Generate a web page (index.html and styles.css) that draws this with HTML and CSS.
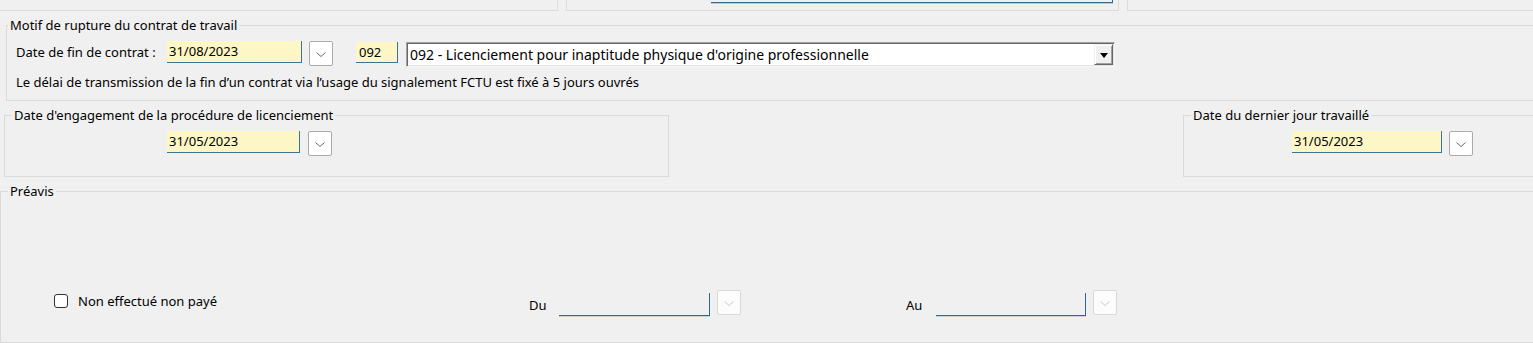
FILE: index.html
```html
<!DOCTYPE html>
<html lang="fr">
<head>
<meta charset="utf-8">
<title>Motif de rupture</title>
<link rel="stylesheet" href="styles.css">
</head>
<body>
<div class="screen">
  <div class="toprow">
    <div class="tbox tbox1"></div>
    <div class="tbox tbox2"><div class="tinput"></div></div>
    <div class="tbox tbox3"></div>
  </div>

  <fieldset class="grp grp-motif">
    <legend>Motif de rupture du contrat de travail</legend>
    <div class="row1">
      <span class="lbl">Date de fin de contrat :</span>
      <div class="field date-fin">31/08/2023</div>
      <button class="cal cal-fin" type="button"><svg width="10" height="5" viewBox="0 0 10 5"><path d="M0.5 0.5 L5 4.5 L9.5 0.5" fill="none" stroke="#6a6a6a" stroke-width="1"/></svg></button>
      <div class="field code">092</div>
      <div class="combo">
        <span class="combo-text">092 - Licenciement pour inaptitude physique d'origine professionnelle</span>
        <span class="combo-btn"><svg width="8" height="5" viewBox="0 0 8 5"><path d="M0 0 H8 L4 5 Z" fill="#000"/></svg></span>
      </div>
    </div>
    <p class="note">Le délai de transmission de la fin d’un contrat via l’usage du signalement FCTU est fixé à 5 jours ouvrés</p>
  </fieldset>

  <div class="midrow">
    <fieldset class="grp grp-eng">
      <legend>Date d'engagement de la procédure de licenciement</legend>
      <div class="daterow">
        <div class="field date-eng">31/05/2023</div>
        <button class="cal cal-eng" type="button"><svg width="10" height="5" viewBox="0 0 10 5"><path d="M0.5 0.5 L5 4.5 L9.5 0.5" fill="none" stroke="#6a6a6a" stroke-width="1"/></svg></button>
      </div>
    </fieldset>
    <fieldset class="grp grp-last">
      <legend>Date du dernier jour travaillé</legend>
      <div class="daterow">
        <div class="field date-last">31/05/2023</div>
        <button class="cal cal-last" type="button"><svg width="10" height="5" viewBox="0 0 10 5"><path d="M0.5 0.5 L5 4.5 L9.5 0.5" fill="none" stroke="#6a6a6a" stroke-width="1"/></svg></button>
      </div>
    </fieldset>
  </div>

  <fieldset class="grp grp-preavis">
    <legend>Préavis</legend>
    <div class="prerow">
      <label class="chk"><span class="box"></span><span>Non effectué non payé</span></label>
      <span class="plbl">Du</span>
      <div class="dfield dfield-du"></div>
      <button class="cal dis" type="button" disabled><svg width="10" height="5" viewBox="0 0 10 5"><path d="M0.5 0.5 L5 4.5 L9.5 0.5" fill="none" stroke="#c9c9c9" stroke-width="1"/></svg></button>
      <span class="plbl plbl-au">Au</span>
      <div class="dfield dfield-au"></div>
      <button class="cal dis" type="button" disabled><svg width="10" height="5" viewBox="0 0 10 5"><path d="M0.5 0.5 L5 4.5 L9.5 0.5" fill="none" stroke="#c9c9c9" stroke-width="1"/></svg></button>
    </div>
  </fieldset>
</div>
</body>
</html>
```

FILE: styles.css
```css
* { box-sizing: border-box; }

html, body {
  margin: 0;
  padding: 0;
  background: #f0f0f0;
}

body {
  font-family: "Noto Sans", "Open Sans", sans-serif;
  font-size: 13px;
  color: #000;
}

.screen {
  width: 1533px;
  height: 343px;
  overflow: hidden;
  background: #f0f0f0;
}

/* top partial boxes */
.toprow {
  display: flex;
  height: 11px;
}
.tbox {
  height: 11px;
  border-bottom: 1px solid #dcdcdc;
  flex: none;
}
.tbox1 {
  width: 558px;
  border-right: 1px solid #dcdcdc;
}
.tbox2 {
  width: 553px;
  margin-left: 8px;
  border-left: 1px solid #dcdcdc;
  border-right: 1px solid #dcdcdc;
}
.tbox3 {
  width: 420px;
  margin-left: 8px;
  border-left: 1px solid #dcdcdc;
}
.tinput {
  margin-left: 144px;
  width: 402px;
  height: 3px;
  border-bottom: 1px solid #2f6a8f;
  border-right: 1px solid #2f6a8f;
  box-shadow: 0 1px 0 #b9cad6;
}

/* group boxes */
.grp {
  margin: 0;
  padding: 0;
  border: 1px solid #dadada;
  min-inline-size: 0;
}
.grp legend {
  padding: 0 2px;
  line-height: 16px;
  height: 16px;
  margin-left: 7px;
}

.grp-motif {
  margin: 6px 0 0 6px;
  width: 1540px;
  padding: 0 0 10px 0;
}
.grp-motif legend { margin-left: 1px; }

.row1 {
  display: flex;
  align-items: flex-start;
  margin-top: 8px;
  height: 26px;
  padding-left: 9px;
}
.lbl {
  width: 151px;
  line-height: 22px;
  flex: none;
}

.field {
  background: #fdf7c6;
  border-right: 1px solid #3d7396;
  border-bottom: 1px solid #3d7396;
  line-height: 21px;
  padding-left: 2px;
  flex: none;
}
.date-fin { width: 135px; height: 22px; }
.code { width: 42px; height: 21px; margin-left: 23px; margin-top: 1px; line-height: 20px; padding-left: 3px; }

.cal {
  flex: none;
  width: 24px;
  height: 25px;
  margin: 0;
  padding: 0;
  background: #fff;
  border: 1px solid #ababab;
  border-radius: 2px;
  display: flex;
  align-items: center;
  justify-content: center;
}
.cal svg { display: block; margin-top: 1px; }
.cal-fin { margin-left: 7px; }

.combo {
  flex: none;
  width: 709px;
  height: 25px;
  margin-left: 8px;
  margin-top: 1px;
  background: #fff;
  border-top: 1px solid #a0a0a0;
  border-left: 1px solid #a0a0a0;
  border-right: 1px solid #f7f7f7;
  border-bottom: 1px solid #f7f7f7;
  box-shadow: inset 1px 1px 0 #696969, inset -1px -1px 0 #e3e3e3;
  display: flex;
  align-items: stretch;
  padding: 1px;
}
.combo-text {
  flex: 1;
  padding-left: 2px;
  line-height: 21px;
  font-size: 14px;
  white-space: nowrap;
}
.combo-btn {
  width: 19px;
  background: #f0f0f0;
  border-top: 1px solid #f0f0f0;
  border-left: 1px solid #f0f0f0;
  border-right: 1px solid #696969;
  border-bottom: 1px solid #696969;
  box-shadow: inset 1px 1px 0 #fff, inset -1px -1px 0 #a0a0a0;
  display: flex;
  align-items: center;
  justify-content: center;
}
.combo-btn svg { display: block; margin-top: 1px; }

.note {
  margin: 7px 0 0 0;
  line-height: 16px;
  padding-left: 9px;
}

/* middle row */
.midrow {
  display: flex;
  align-items: flex-start;
  margin-top: 6px;
}
.grp-eng {
  flex: none;
  width: 665px;
  height: 70px;
  margin-left: 4px;
}
.grp-last {
  flex: none;
  width: 400px;
  height: 70px;
  margin-left: 514px;
}
.daterow {
  display: flex;
  align-items: flex-start;
  margin-top: 8px;
}
.grp-eng .daterow { padding-left: 162px; }
.grp-last .daterow { padding-left: 108px; }
.date-eng { width: 133px; height: 22px; }
.cal-eng { margin-left: 8px; }
.date-last { width: 150px; height: 22px; }
.cal-last { margin-left: 7px; }

/* préavis */
.grp-preavis {
  margin: 6px 0 0 0;
  width: 1540px;
  height: 160px;
}
.prerow {
  display: flex;
  align-items: flex-start;
  margin-top: 91px;
  padding-left: 53px;
}
.chk {
  flex: none;
  width: 475px;
  display: flex;
  align-items: center;
  gap: 10px;
  margin-top: 3px;
  line-height: 16px;
}
.chk .box {
  width: 14px;
  height: 14px;
  border: 1px solid #333;
  border-radius: 3px;
  background: #fff;
  flex: none;
}
.plbl {
  flex: none;
  width: 30px;
  line-height: 16px;
  margin-top: 7px;
}
.plbl-au { margin-left: 165px; }
.dfield {
  flex: none;
  height: 23px;
  margin-top: 3px;
  border-right: 1px solid #2f6a8f;
  border-bottom: 1px solid #2f6a8f;
  box-shadow: 0 1px 0 #c4d3de;
}
.dfield-du { width: 151px; }
.dfield-au { width: 150px; }
.cal.dis {
  margin-left: 7px;
  background: #fcfcfc;
  border-color: #d9d9d9;
}
```
